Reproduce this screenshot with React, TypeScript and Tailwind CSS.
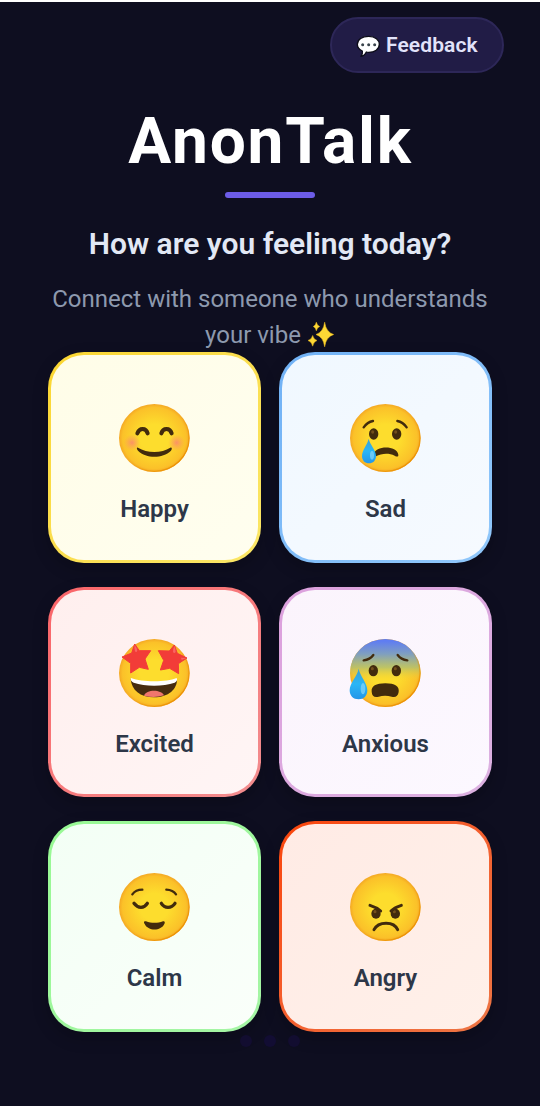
import type { ReactNode } from "react";

const INK = "#422b0d";

function Face({ children, id, worried = false }: { children: ReactNode; id: string; worried?: boolean }) {
  return (
    <svg viewBox="-106 -105 216 210" className="h-[70px] w-[72px] shrink-0 overflow-visible" aria-hidden="true">
      <defs>
        <radialGradient id={`${id}-skin`} cx="0.5" cy="0.5" r="0.5">
          <stop offset="0.4" stopColor="#fddd2d" />
          <stop offset="0.9" stopColor="#fbc129" />
          <stop offset="1" stopColor="#f4a824" />
        </radialGradient>
        <linearGradient id={`${id}-cold`} x1="0" y1="0" x2="0" y2="1">
          <stop offset="0.03" stopColor="#5f7df2" />
          <stop offset="0.22" stopColor="#7f9fc0" />
          <stop offset="0.42" stopColor="#b3c06e" stopOpacity="0.85" />
          <stop offset="0.62" stopColor="#fbd52e" stopOpacity="0" />
        </linearGradient>
        <linearGradient id={`${id}-rim`} x1="0" y1="0" x2="1" y2="1">
          <stop offset="0.5" stopColor="#eb8f00" stopOpacity="0" />
          <stop offset="0.9" stopColor="#eb8f00" />
        </linearGradient>
        <radialGradient id={`${id}-blush`}>
          <stop offset="0" stopColor="#fb8770" stopOpacity="0.85" />
          <stop offset="1" stopColor="#fb9a60" stopOpacity="0" />
        </radialGradient>
        <linearGradient id={`${id}-tear`} x1="0" y1="0" x2="0" y2="1">
          <stop offset="0" stopColor="#3c9fd0" />
          <stop offset="0.5" stopColor="#29b6f6" />
          <stop offset="1" stopColor="#2496e8" />
        </linearGradient>
      </defs>
      <ellipse rx="106" ry="102" fill={`url(#${id}-skin)`} />
      {worried && <ellipse rx="106" ry="102" fill={`url(#${id}-cold)`} />}
      <ellipse rx="104" ry="100" fill="none" stroke={`url(#${id}-rim)`} strokeWidth="4" />
      {children}
    </svg>
  );
}

function Eye({ x, y, ry = 17 }: { x: number; y: number; ry?: number }) {
  return (
    <g>
      <ellipse cx={x} cy={y} rx="14" ry={ry} fill={INK} />
      <ellipse cx={x - 3} cy={y - 6} rx="4.5" ry="5" fill="#896024" opacity="0.7" />
    </g>
  );
}

const line = { fill: "none", stroke: INK, strokeLinecap: "round" as const, strokeLinejoin: "round" as const };

function HappyFace() {
  return (
    <Face id="happy">
      <circle cx="-67" cy="14" r="25" fill="url(#happy-blush)" />
      <circle cx="67" cy="14" r="25" fill="url(#happy-blush)" />
      <path {...line} strokeWidth="12" d="M-51 -14C-45 -31 -25 -31 -20 -14M21 -14C26 -31 47 -31 52 -14" />
      <path fill={INK} d="M-49 29C-22 46 22 46 48 29C53 27 54 33 50 38C24 62 -24 62 -49 38C-54 33 -53 27 -49 29Z" />
    </Face>
  );
}

function SadFace() {
  return (
    <Face id="sad">
      <path {...line} strokeWidth="7" d="M-65 -32Q-54 -48 -37 -51M36 -51Q53 -48 64 -32" />
      <Eye x={-35} y={-12} />
      <Eye x={34} y={-12} />
      <path fill={INK} d="M-35 50C-31 21 35 21 39 50C40 57 34 57 28 53C10 44 -12 46 -28 55Z" />
      <path fill="url(#sad-tear)" d="M-50 2C-46 20 -28 36 -28 54C-28 68 -37 76 -49 76C-61 76 -70 68 -70 54C-70 36 -54 20 -50 2Z" />
      <ellipse cx="-40" cy="52" rx="6" ry="13" fill="#81d4fa" opacity="0.75" />
    </Face>
  );
}

function ExcitedFace() {
  return (
    <Face id="excited">
      <path fill="#f23c38" stroke="#f23c38" strokeWidth="3" strokeLinejoin="round" d="M-59 -87L-45 -67L-11 -67L-28 -42L-18 -11L-45 -17L-71 0L-71 -29L-97 -48L-68 -60Z" />
      <path fill="#f23c38" stroke="#f23c38" strokeWidth="3" strokeLinejoin="round" d="M60 -84L69 -59L98 -45L72 -28L73 2L46 -14L18 -9L28 -38L12 -67L45 -66Z" />
      <path fill="#fb7470" opacity="0.75" d="M-59 -84Q-53 -77 -51 -67Q-54 -60 -58 -65Q-61 -75 -59 -84ZM60 -81Q64 -72 64 -63Q60 -57 56 -63Q56 -73 60 -81ZM80 -46L96 -45L82 -39Z" />
      <path fill="#462c10" d="M-71 18C-35 30 35 30 68 18C69 48 43 73 -1 73C-43 73 -68 51 -71 18Z" />
      <path fill="#fff" d="M-70 15C-35 28 35 28 67 15C70 21 67 26 61 29C26 41 -27 41 -62 29C-69 26 -73 20 -70 15Z" />
      <path fill="#f0766d" d="M-31 68C-25 49 20 48 29 67Q0 77 -31 68Z" />
    </Face>
  );
}

function AnxiousFace() {
  return (
    <Face id="anxious" worried>
      <path {...line} strokeWidth="7" d="M-65 -38Q-46 -40 -36 -54M37 -54Q47 -40 66 -38" />
      <Eye x={-36} y={-7} />
      <Eye x={33} y={-7} />
      <path fill={INK} d="M-41 56C-43 39 -28 31 0 31C29 31 43 40 40 57C38 71 29 74 19 71C6 67 -8 67 -20 71C-32 75 -40 70 -41 56Z" />
      <path fill="url(#anxious-tear)" d="M-80 -13C-75 12 -54 29 -54 52C-54 69 -65 79 -80 79C-96 79 -107 69 -107 52C-107 29 -85 12 -80 -13Z" />
      <ellipse cx="-67" cy="47" rx="7" ry="17" fill="#81d4fa" opacity="0.75" />
    </Face>
  );
}

function CalmFace() {
  return (
    <Face id="calm">
      <path {...line} strokeWidth="7" d="M-66 -38Q-56 -52 -36 -52M36 -52Q56 -51 65 -38" />
      <path {...line} strokeWidth="10" d="M-61 -11C-49 5 -31 5 -21 -11M21 -11C31 5 51 5 62 -11" />
      <path fill={INK} d="M-25 43C-9 49 10 49 26 43C31 41 33 46 30 51C20 73 -19 73 -29 51C-33 44 -31 41 -25 43Z" />
    </Face>
  );
}

function AngryFace() {
  return (
    <Face id="angry">
      <Eye x={-28} y={20} ry={15} />
      <Eye x={30} y={20} ry={15} />
      <path {...line} strokeWidth="9" d="M-46 -5Q-26 1 -14 12M48 -5Q28 1 17 12" />
      <path {...line} strokeWidth="9" d="M-34 68C-21 42 26 42 37 68" />
    </Face>
  );
}

function SpeechBalloon() {
  return (
    <svg viewBox="0 0 75 69" className="h-[23px] w-[25px] shrink-0" aria-hidden="true">
      <path d="M38 4C58 4 70 15 70 28C70 43 56 52 38 52C36 52 33 52 31 51C28 58 22 63 15 64C19 59 20 54 19 48C10 44 4 37 4 28C4 13 19 4 38 4Z" fill="#fff" stroke="#0c0c18" strokeWidth="4" strokeLinejoin="round" />
      <circle cx="20" cy="29" r="4.5" fill="#39434b" />
      <circle cx="38" cy="29" r="4.5" fill="#39434b" />
      <circle cx="56" cy="29" r="4.5" fill="#39434b" />
    </svg>
  );
}

function Sparkles() {
  return (
    <svg viewBox="0 0 84 80" className="mb-[2px] inline-block h-[27px] w-[28px]" aria-hidden="true">
      <path fill="#fdd835" stroke="#f9c31d" strokeWidth="1.5" strokeLinejoin="round" d="M53 3Q57 33 80 40Q57 47 53 77Q49 47 27 40Q49 33 53 3ZM17 43Q20 55 30 58Q20 61 17 75Q14 61 3 58Q14 55 17 43ZM28 3Q30 13 38 16Q30 19 28 29Q26 19 19 16Q26 13 28 3Z" />
    </svg>
  );
}

const moods = [
  { label: "Happy", face: <HappyFace />, outer: "from-[#fbd62f] to-[#fbe767]", inner: "from-[#fffde8] to-[#fffeef]" },
  { label: "Sad", face: <SadFace />, outer: "from-[#70b1f5] to-[#91c8fb]", inner: "from-[#f0f8ff] to-[#f6faff]" },
  { label: "Excited", face: <ExcitedFace />, outer: "from-[#fa6468] to-[#f28d8f]", inner: "from-[#ffefee] to-[#fff5f5]" },
  { label: "Anxious", face: <AnxiousFace />, outer: "from-[#dca0dd] to-[#dcb1e1]", inner: "from-[#fbf4fc] to-[#fcf8ff]" },
  { label: "Calm", face: <CalmFace />, outer: "from-[#98f994] to-[#a5f5a5]", inner: "from-[#f3fff5] to-[#fafffa]" },
  { label: "Angry", face: <AngryFace />, outer: "from-[#f94407] to-[#ed7544]", inner: "from-[#ffebe5] to-[#fff0e9]" },
];

export default function App() {
  return (
    <main className="flex h-[1106px] w-[540px] flex-col overflow-hidden border-t-2 border-white bg-[#0e0e20] font-['Roboto',sans-serif]">
      <header className="flex justify-end pt-[15px] pr-9">
        <button className="flex h-14 w-[174px] items-center gap-[5px] rounded-full border-2 border-[#2d2758] bg-[#211c46] pt-[2px] pl-6 text-[21px] font-semibold tracking-[0.1px] text-[#e2e3fa]">
          <SpeechBalloon />
          <span className="whitespace-nowrap">Feedback</span>
        </button>
      </header>

      <section className="flex flex-col items-center text-center">
        <h1 className="mt-[30.5px] h-[76px] pl-px text-[64px] leading-[76px] font-bold tracking-[1.8px] text-white">AnonTalk</h1>
        <div className="mt-[12.5px] h-[6px] w-[90px] rounded-full bg-[#6c5ce7]" />
        <h2 className="mt-[28px] h-9 text-[30px] leading-9 font-semibold whitespace-nowrap text-[#e2e8f5]">How are you feeling today?</h2>
        <p className="mt-[19px] h-[71px] text-[24px] leading-9 whitespace-nowrap text-[#8d99ae]">
          <span className="block">Connect with someone who understands</span>
          <span className="flex items-center justify-center gap-[6px]">your vibe <Sparkles /></span>
        </p>
      </section>

      <section className="grid grid-cols-2 gap-x-[18px] gap-y-[24px] px-12">
        {moods.map((mood) => (
          <button key={mood.label} className={`h-[210.5px] rounded-[36px] bg-linear-to-br p-[3px] shadow-[0_6px_16px_rgba(0,0,0,0.22)] ${mood.outer}`}>
            <span className={`flex h-full flex-col items-center rounded-[33px] bg-linear-to-br pt-[48px] ${mood.inner}`}>
              {mood.face}
              <span className="mt-[20px] text-[24px] leading-8 font-semibold text-[#2d3748]">{mood.label}</span>
            </span>
          </button>
        ))}
      </section>

      <div className="mt-[3px] flex justify-center gap-[12px]">
        <i className="size-3 rounded-full bg-[#120d30]" />
        <i className="size-3 rounded-full bg-[#120d33]" />
        <i className="size-3 rounded-full bg-[#120d30]" />
      </div>
    </main>
  );
}
